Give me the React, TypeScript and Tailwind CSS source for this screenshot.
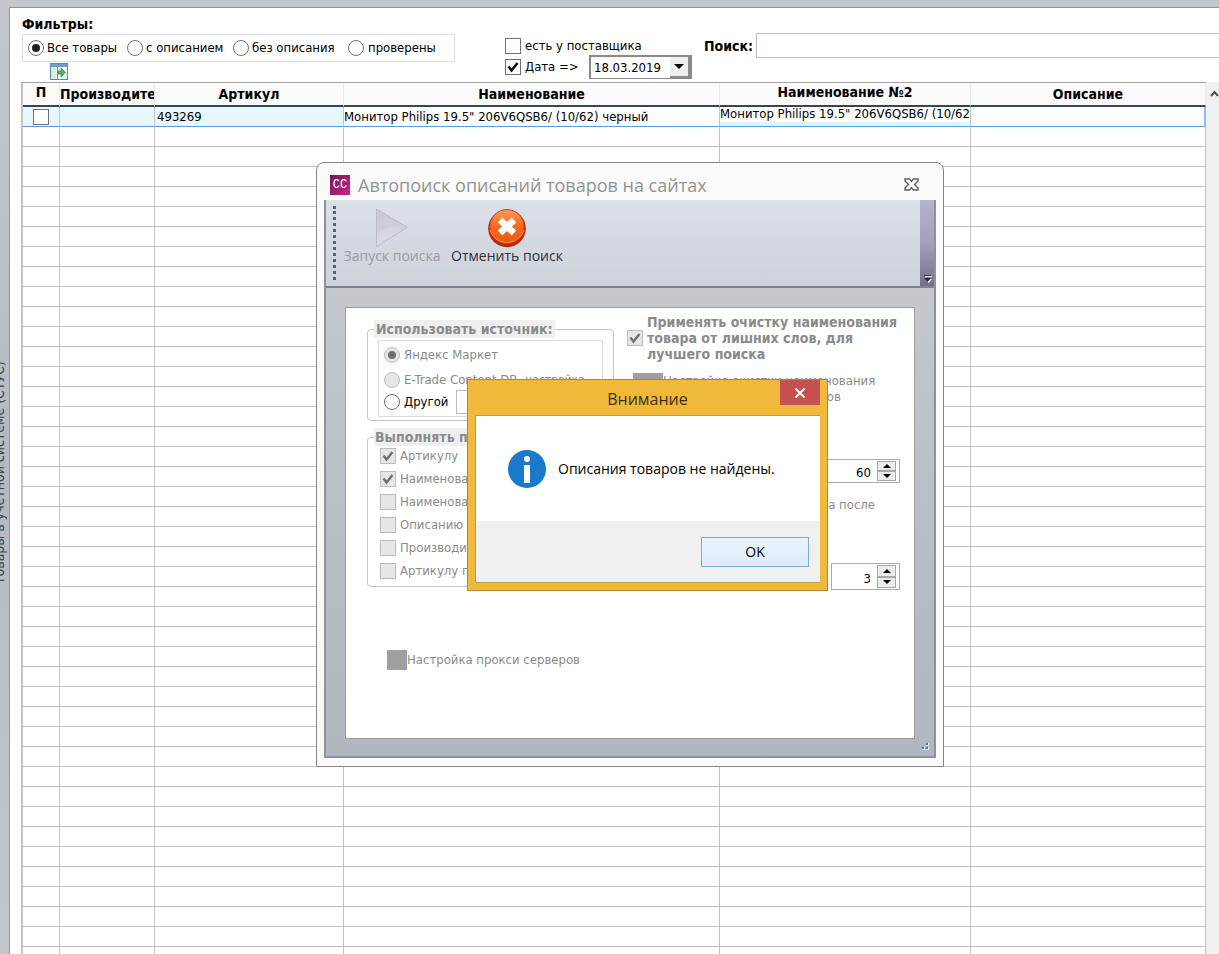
import React, { useState } from 'react';
import { clsx } from 'clsx';

const COLUMNS = [
  { title: 'П', col: 'w-[37px]', raised: true },
  { title: 'Производитель', col: 'w-[95px]' },
  { title: 'Артикул', col: 'w-[189px]' },
  { title: 'Наименование', col: 'w-[376px]' },
  { title: 'Наименование №2', col: 'w-[251px]', raised: true },
  { title: 'Описание', col: '' },
];

const PRODUCT = 'Монитор Philips 19.5" 206V6QSB6/ (10/62) черный';

const SEARCH_FIELDS = [
  { label: 'Артикулу', checked: true },
  { label: 'Наименованию', checked: true },
  { label: 'Наименованию №2', checked: false },
  { label: 'Описанию', checked: false },
  { label: 'Производителю', checked: false },
  { label: 'Артикулу производителя', checked: false },
];

interface ToggleProps {
  label: string;
  name?: string;
  checked?: boolean;
  disabled?: boolean;
  className?: string;
}

const Tick: React.FC = () => (
  <svg viewBox="0 0 16 16" className="pointer-events-none absolute inset-0 hidden size-4 peer-checked:block">
    <path d="M3.5 7.5 L6.5 11.5 L12.5 4" fill="none" stroke="currentColor" strokeWidth="2.4" />
  </svg>
);

const CheckBox: React.FC<ToggleProps> = ({ label, checked = false, disabled = false, className }) => (
  <label className={clsx('flex items-center gap-1 whitespace-nowrap', disabled ? 'text-[#8a8a8a]' : 'text-black', className)}>
    <span className={clsx('relative size-4 shrink-0', disabled ? 'text-[#707070]' : 'text-black')}>
      <input
        type="checkbox"
        defaultChecked={checked}
        disabled={disabled}
        className="peer block size-4 appearance-none border border-[#707070] bg-white disabled:border-[#bcbcbc] disabled:bg-[#e6e6e6]"
      />
      <Tick />
    </span>
    {label}
  </label>
);

const Radio: React.FC<ToggleProps> = ({ label, name, checked = false, disabled = false, className }) => (
  <label className={clsx('flex items-center gap-1 whitespace-nowrap', disabled ? 'text-[#8a8a8a]' : 'text-black', className)}>
    <span className="relative size-4 shrink-0">
      <input
        type="radio"
        name={name}
        defaultChecked={checked}
        disabled={disabled}
        className="peer block size-4 appearance-none rounded-full border border-[#707070] bg-white disabled:border-[#bcbcbc] disabled:bg-[#e6e6e6]"
      />
      <span
        className={clsx(
          'pointer-events-none absolute inset-1 hidden rounded-full peer-checked:block',
          disabled ? 'bg-[#707070]' : 'bg-[#202020]'
        )}
      />
    </span>
    {label}
  </label>
);

const Spinner: React.FC<{ label: string; initial: number; className?: string }> = ({ label, initial, className }) => {
  const [value, setValue] = useState(initial);
  return (
    <div className={clsx('flex items-stretch border border-[#ababab] bg-white p-px pr-[3px]', className)}>
      <input
        aria-label={label}
        value={value}
        onChange={(e) => setValue(Number(e.target.value) || 0)}
        className="min-w-0 flex-1 pr-[6px] pt-1 text-right text-black outline-none"
      />
      <div className="flex w-[19px] flex-col border border-[#a8a8a8] bg-[#ececec]">
        <button aria-label="Больше" onClick={() => setValue(value + 1)} className="flex flex-1 items-center justify-center border-b-2 border-[#a8a8a8]">
          <svg viewBox="0 0 8 4" className="h-1 w-2"><path d="M4 0 L8 4 H0 Z" /></svg>
        </button>
        <button aria-label="Меньше" onClick={() => setValue(value - 1)} className="flex flex-1 items-center justify-center">
          <svg viewBox="0 0 8 4" className="h-1 w-2"><path d="M0 0 H8 L4 4 Z" /></svg>
        </button>
      </div>
    </div>
  );
};

const Filters: React.FC = () => (
  <header className="flex items-start pb-[2px] pl-3 pt-2">
    <div className="w-[433px] shrink-0">
      <div className="h-[18px] text-sm font-bold leading-4">Фильтры:</div>
      <div className="flex h-7 items-center border border-[#dedede] pl-[5px]">
        <Radio name="filter" label="Все товары" checked className="w-[99px] !gap-[3px]" />
        <Radio name="filter" label="с описанием" className="w-[106px] !gap-[3px]" />
        <Radio name="filter" label="без описания" className="w-[115px] !gap-[3px]" />
        <Radio name="filter" label="проверены" />
      </div>
      <button aria-label="Экспорт" className="ml-7 mt-px block">
        <svg viewBox="0 0 18 17" className="h-[17px] w-[18px]">
          <rect x="0.5" y="0.5" width="17" height="16" fill="#f4faff" stroke="#5f86b8" />
          <rect x="1" y="1" width="16" height="3" fill="#6f9bd3" />
          <rect x="1" y="4" width="5" height="12" fill="#d5f2cc" />
          <path d="M7.5 4 V16" stroke="#6b9a72" />
          <path d="M8 8 H11 V5 L15.5 9.500 L11 14 V11 H8 Z" fill="#5fb255" stroke="#38843a" strokeWidth="0.7" />
        </svg>
      </button>
    </div>
    <div className="ml-[50px] mt-5 w-[199px] shrink-0">
      <CheckBox label="есть у поставщика" className="h-[19px]" />
      <div className="flex items-center">
        <CheckBox label="Дата =>" checked className="w-[84px]" />
        <div className="flex h-6 w-[103px] border-2 border-b border-[#8a8a8a] bg-white">
          <input aria-label="Дата" defaultValue="18.03.2019" className="min-w-0 flex-1 pl-[3px] outline-none" />
          <button aria-label="Выбрать дату" className="flex w-5 items-center justify-center border-b-2 border-r-2 border-[#8a8a8a] bg-[#efefef]">
            <svg viewBox="0 0 10 5" className="h-[5px] w-[10px]"><path d="M0 0 H10 L5 5 Z" /></svg>
          </button>
        </div>
      </div>
    </div>
    <label className="mt-[17px] flex flex-1 items-center gap-[3px] text-sm font-bold leading-4">
      Поиск:
      <input className="h-[25px] min-w-0 flex-1 border border-r-0 border-[#bdbdbd] bg-white px-1 font-normal outline-none" />
    </label>
  </header>
);

const ProductTable: React.FC = () => (
  <div className="ml-[11px] flex items-stretch">
    <div className="min-w-0 flex-1">
      <table className="w-full table-fixed border-separate border-spacing-0 border-l-2 border-t border-l-[#c4c4c4] border-t-[#a5a5a8]">
        <colgroup>
          {COLUMNS.map((c) => <col key={c.title} className={c.col} />)}
        </colgroup>
        <thead>
          <tr className="h-6 bg-[#fbfbfc] text-sm">
            {COLUMNS.map((c) => (
              <th
                key={c.title}
                className={clsx(
                  'overflow-hidden whitespace-nowrap border-b-2 border-r border-b-[#3a4552] border-r-[#e4eef5] p-0 leading-4',
                  c.raised && 'pb-1',
                  c.title === 'Производитель' && 'text-left'
                )}
              >
                {c.title}
              </th>
            ))}
          </tr>
        </thead>
        <tbody>
          <tr className="h-5 [&>td]:overflow-hidden [&>td]:whitespace-nowrap [&>td]:border-b [&>td]:border-r [&>td]:border-b-[#5b9be0] [&>td]:border-r-[#c4c4c4] [&>td]:p-0 [&>td]:leading-4">
            <td className="bg-[#e6f7fe]">
              <input type="checkbox" aria-label="Выбрать товар" className="mx-auto block size-4 appearance-none border border-[#707070] bg-white" />
            </td>
            <td className="bg-[#e6f7fe]" />
            <td className="bg-[#e6f7fe]"><span className="pl-[2px]">493269</span></td>
            <td>{PRODUCT}</td>
            <td className="bg-gradient-to-b from-white from-80% to-[#e0f6fc] to-80% align-top"><span className="block h-[17px] leading-[14px]">{PRODUCT}</span></td>
            <td className="!border-r-2 !border-r-[#8fc0ee]" />
          </tr>
          {Array.from({ length: 42 }, (_, row) => (
            <tr key={row} className="h-5">
              {COLUMNS.map((c) => <td key={c.title} className="border-b border-r border-[#c4c4c4] p-0" />)}
            </tr>
          ))}
        </tbody>
      </table>
    </div>
    <div className="flex w-[13px] shrink-0 justify-end overflow-hidden bg-[#f0f0f0] pt-2">
      <svg viewBox="0 0 9 7" className="h-[7px] w-[9px]"><path d="M1 6 L4.500 2 L8 6" fill="none" stroke="#505050" strokeWidth="2" /></svg>
    </div>
  </div>
);

const Toolbar: React.FC = () => (
  <div className="flex h-[88px] border-b-2 border-[#7d8296] bg-gradient-to-b from-[#dce0e8] to-[#cdd3db] font-['Open_Sans','Noto_Sans',sans-serif] text-sm">
    <div className="my-[6px] ml-[7px] w-1 border-l-[3px] border-dotted border-[#5a5d88]" />
    <button disabled className="ml-[6px] flex w-[98px] flex-col items-center pt-2 text-[#9a9aa0]">
      <svg viewBox="0 0 34 40" className="h-10 w-[34px]">
        <defs>
          <linearGradient id="play" x1="0" y1="0" x2="0" y2="1">
            <stop offset="0" stopColor="#cbc9d9" />
            <stop offset="1" stopColor="#dcdbe5" />
          </linearGradient>
        </defs>
        <path d="M1.500 1 L32.500 19.500 L1.500 38.500 Z" fill="url(#play)" stroke="#bdb9cc" strokeLinejoin="round" />
        <path d="M2.500 25 Q8 18 28 17.500 L6 4 L2.500 3 Z" fill="#c9c5d6" opacity="0.5" />
      </svg>
      <span className="whitespace-nowrap leading-4">Запуск поиска</span>
    </button>
    <button className="ml-[6px] flex w-[120px] flex-col items-center pt-2 text-[#2f2f38]">
      <svg viewBox="0 0 40 40" className="size-10">
        <defs>
          <linearGradient id="cancel" x1="0" y1="0" x2="0" y2="1">
            <stop offset="0" stopColor="#ff9a5e" />
            <stop offset="0.5" stopColor="#f56a1c" />
            <stop offset="1" stopColor="#f0560e" />
          </linearGradient>
        </defs>
        <circle cx="20" cy="20.500" r="18.800" fill="#b9290b" />
        <circle cx="20" cy="18.500" r="17" fill="url(#cancel)" stroke="#cf431a" />
        <path d="M3 22 A17.500 16.500 0 0 0 37 22" fill="none" stroke="#ff8a4a" strokeWidth="1" />
        <path d="M13 12 L27 25 M27 12 L13 25" stroke="#fff" strokeWidth="6.500" />
      </svg>
      <span className="whitespace-nowrap leading-4">Отменить поиск</span>
    </button>
    <div className="ml-auto flex w-[14px] items-end justify-center bg-gradient-to-b from-[#b5b3cb] via-[#a3a1ba] to-[#73708f] pb-[3px]">
      <svg viewBox="0 0 9 9" className="size-[9px]">
        <path d="M1 1.500 H8" stroke="#333" />
        <path d="M2 2.500 H9" stroke="#fff" />
        <path d="M2 5 H9 L5.500 9 Z" fill="#fff" />
        <path d="M1 4 H8 L4.500 8 Z" fill="#26263a" />
      </svg>
    </div>
  </div>
);

const SourceGroup: React.FC = () => (
  <fieldset className="h-[101px] min-w-0 rounded border border-[#c6c6c6] px-[10px]">
    <legend className="-ml-1 bg-[#efefef] px-[2px] text-sm font-bold leading-[18px] text-[#8a8a8a]">Использовать источник:</legend>
    <div className="mt-[2px] flex h-[77px] flex-col border border-[#dedede] pl-[5px] pt-[5px]">
      <Radio name="source" label="Яндекс Маркет" checked disabled className="h-[18px]" />
      <div className="mt-[7px] flex h-[18px] items-center gap-2 text-[#8a8a8a]">
        <Radio name="source" label="E-Trade Content DB" disabled />
        <a href="#settings" className="text-xs">настройка</a>
      </div>
      <div className="mt-px flex h-6 items-center gap-2">
        <Radio name="source" label="Другой" />
        <input aria-label="Другой источник" className="h-6 min-w-0 flex-1 border border-[#bdbdbd]" />
      </div>
    </div>
  </fieldset>
);

const FieldsGroup: React.FC = () => (
  <fieldset className="mt-[7px] h-[159px] min-w-0 rounded border border-[#c6c6c6] pl-3">
    <legend className="-ml-[6px] bg-[#efefef] px-px text-sm font-bold leading-[18px] text-[#8a8a8a]">Выполнять поиск по:</legend>
    <div className="mt-px flex flex-col gap-[5px]">
      {SEARCH_FIELDS.map((f) => (
        <CheckBox key={f.label} label={f.label} checked={f.checked} disabled className="h-[18px]" />
      ))}
    </div>
  </fieldset>
);

const SearchWindow: React.FC = () => (
  <section className="absolute left-[316px] top-[162px] flex w-[628px] flex-col rounded-t-lg border border-[#85858c] bg-[#fafafb] px-[7px] pb-2">
    <div className="flex h-[37px] items-center pl-[6px] pt-[6px]">
      <span className="flex size-5 items-center justify-center bg-gradient-to-br from-[#7a1250] to-[#c42a90] font-mono text-xs text-white">CC</span>
      <h2 className="ml-2 font-['Open_Sans','Noto_Sans',sans-serif] text-lg leading-6 text-[#939396]">Автопоиск описаний товаров на сайтах</h2>
      <button aria-label="Закрыть" className="ml-auto mr-[17px]">
        <svg viewBox="0 0 15 13" className="h-[13px] w-[15px]">
          <path d="M1 1 H5.500 L7.500 3.500 L9.500 1 H14 V3 L10.500 6.500 L14 10 V12 H9.500 L7.500 9.500 L5.500 12 H1 V10 L4.500 6.500 L1 3 Z" fill="#fff" stroke="#5c5c68" strokeWidth="1.400" />
        </svg>
      </button>
    </div>
    <div className="border-2 border-t-0 border-[#8f9296]">
      <Toolbar />
      <div className="relative bg-gradient-to-b from-[#c5c9cc] via-[#b8bdc6] to-[#b2b7bf] px-[19px] pb-[17px] pt-[19px]">
        <div className="flex h-[432px] border border-[#9c9ea2] bg-white text-[#8a8a8a]">
          <div className="ml-[21px] w-[247px] pt-3">
            <SourceGroup />
            <FieldsGroup />
            <button disabled className="ml-5 mt-[63px] flex items-center">
              <span className="size-5 bg-[#9f9f9f]" />
              Настройка прокси серверов
            </button>
          </div>
          <div className="ml-[13px] flex flex-1 flex-col pr-[14px] pt-[6px]">
            <CheckBox
              label={'Применять очистку наименования\nтовара от лишних слов, для\nлучшего поиска'}
              checked
              disabled
              className="!whitespace-pre text-sm font-bold leading-4"
            />
            <button disabled className="ml-[6px] mt-[11px] flex items-start">
              <span className="h-5 w-[30px] bg-[#9f9f9f]" />
              <span className="whitespace-pre text-center leading-4">{'Настройка очистки наименования\nтовара от лишних слов'}</span>
            </button>
            <Spinner label="Пауза, сек" initial={60} className="mt-[54px] h-6 w-[78px] self-end" />
            <p className="mr-[25px] mt-[14px] self-end leading-4">Пауза после</p>
            <Spinner label="Количество попыток" initial={3} className="mt-[50px] h-[27px] w-[69px] self-end" />
          </div>
        </div>
        <svg viewBox="0 0 9 9" className="absolute bottom-1 right-1 size-[9px]">
          <path d="M5 0 H8 V3 H5 Z M1 4 H4 V7 H1 Z M5 4 H8 V7 H5 Z" fill="#e6ecf6" />
          <path d="M5 0 H7 V2 H5 Z M1 4 H3 V6 H1 Z M5 4 H7 V6 H5 Z" fill="#4a6ea8" />
        </svg>
      </div>
    </div>
  </section>
);

const MessageBox: React.FC = () => (
  <div
    role="alertdialog"
    aria-label="Внимание"
    className="absolute left-[467px] top-[379px] w-[361px] border border-[#b28a2c] bg-[#f0b93a] px-[7px] pb-[7px] font-['Open_Sans','Noto_Sans',sans-serif]"
  >
    <div className="relative flex h-[35px] items-center justify-center pt-[2px] text-base text-[#3c3014]">
      Внимание
      <button aria-label="Закрыть" className="absolute right-0 top-0 flex h-[25px] w-10 items-center justify-center bg-[#c75050]">
        <svg viewBox="0 0 12 10" className="h-[10px] w-3"><path d="M1.500 0.500 L10.500 9.500 M10.500 0.500 L1.500 9.500" stroke="#fff" strokeWidth="2" /></svg>
      </button>
    </div>
    <div className="border border-r-0 border-[#c39a3a] bg-white">
      <div className="flex h-[105px] items-center gap-3 pl-8">
        <svg viewBox="0 0 38 38" className="size-[38px]">
          <circle cx="19" cy="19" r="19" fill="#1979ca" />
          <circle cx="19" cy="9" r="3" fill="#fff" />
          <rect x="16" y="15" width="6" height="18" fill="#fff" />
        </svg>
        <p className="text-sm text-black">Описания товаров не найдены.</p>
      </div>
      <div className="flex h-[61px] items-center justify-end bg-[#f0f0f0] pr-[11px]">
        <button className="h-[30px] w-[108px] border border-[#7eabdc] bg-gradient-to-b from-[#ecf4fc] to-[#dcecfc] text-sm text-black">OK</button>
      </div>
    </div>
  </div>
);

export default function App() {
  return (
    <div className="relative flex h-screen overflow-hidden bg-gradient-to-b from-[#c4c8cc] via-[#b4b9c2] to-[#c4c8cc] pt-[7px] font-['DejaVu_Sans_Condensed','DejaVu_Sans',sans-serif] text-[13px] leading-4 text-black">
      <aside className="flex w-[9px] shrink-0 items-center justify-end overflow-hidden pb-4">
        <span className="rotate-180 whitespace-nowrap text-sm text-[#3c4048] [writing-mode:vertical-rl]">Товары в учетной системе (СТУС)</span>
      </aside>
      <main className="min-w-0 flex-1 overflow-hidden border-l border-t border-[#909498] bg-white">
        <Filters />
        <ProductTable />
      </main>
      <SearchWindow />
      <MessageBox />
    </div>
  );
}
